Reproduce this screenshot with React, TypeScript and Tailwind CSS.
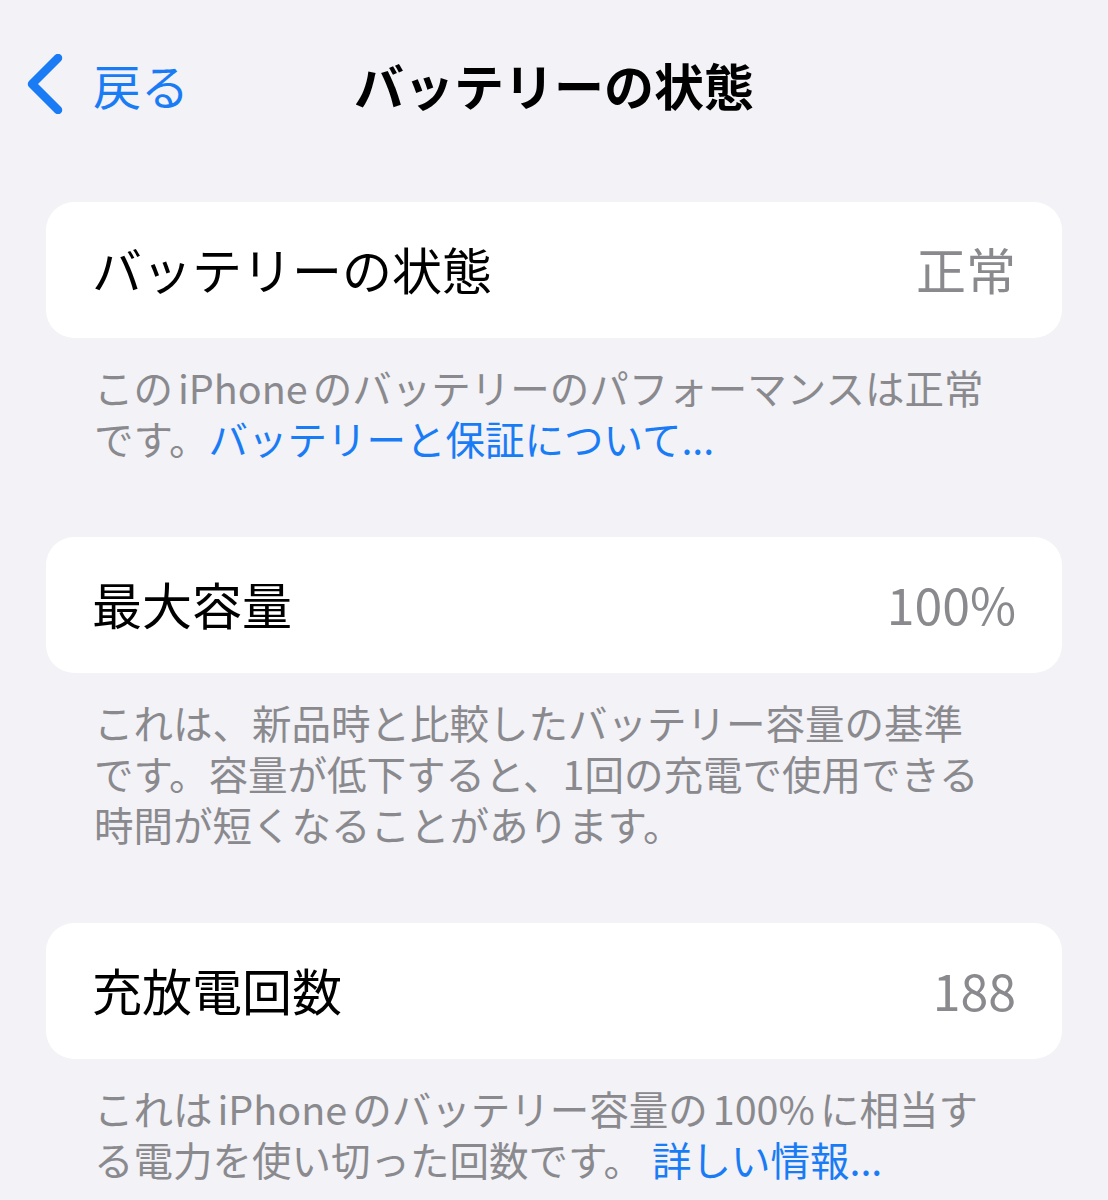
import { ReactNode } from "react";

const link = "text-[#1a7cf5]";

function Row({ label, value }: { label: string; value: string }) {
  return (
    <div className="flex h-[136px] items-center justify-between rounded-[28px] bg-white px-[46px] pb-[5px]">
      <span className="text-[50px] leading-none text-black">{label}</span>
      <span className="text-[50px] leading-none text-[#8a8a8e]">{value}</span>
    </div>
  );
}

function Note({ children }: { children: ReactNode }) {
  return (
    <p className="mt-[23px] whitespace-nowrap px-[48px] text-[39.5px] leading-[51px] text-[#8a8a8e]">
      {children}
    </p>
  );
}

// latin words sit with a narrow gap between kana
function W({ children }: { children: ReactNode }) {
  return <span className="mx-[5px]">{children}</span>;
}

export default function App() {
  return (
    <div className="min-h-[1200px] w-full bg-[#f2f2f7] font-['Noto_Sans_CJK_JP','Noto_Sans',sans-serif]">
      {/* nav bar */}
      <div className="grid h-[136px] grid-cols-[1fr_auto_1fr] items-center pt-[32px]">
        <div className="flex items-center gap-[30px] pl-[27px]">
          <svg width="36" height="60" viewBox="0 0 36 60" fill="none">
            <path
              d="M31 4 L5 30 L31 56"
              stroke="#1a7cf5"
              strokeWidth="8.5"
              strokeLinecap="round"
              strokeLinejoin="round"
            />
          </svg>
          <span className={`text-[48px] leading-none ${link}`}>戻る</span>
        </div>
        <h1 className="text-[50px] font-bold leading-none text-black">バッテリーの状態</h1>
        <div />
      </div>

      <div className="px-[46px] pt-[66px]">
        <Row label="バッテリーの状態" value="正常" />
        <Note>
          この<W>iPhone</W>のバッテリーのパフォーマンスは正常
          <br />
          です。<span className={link}>バッテリーと保証について...</span>
        </Note>

        <div className="mt-[74px]">
          <Row label="最大容量" value="100%" />
        </div>
        <Note>
          これは、新品時と比較したバッテリー容量の基準
          <br />
          です。容量が低下すると、1回の充電で使用できる
          <br />
          時間が短くなることがあります。
        </Note>

        <div className="mt-[74px]">
          <Row label="充放電回数" value="188" />
        </div>
        <Note>
          これは<W>iPhone</W>のバッテリー容量の<W>100%</W>に相当す
          <br />
          る電力を使い切った回数です。 <span className={link}>詳しい情報...</span>
        </Note>
      </div>
    </div>
  );
}
